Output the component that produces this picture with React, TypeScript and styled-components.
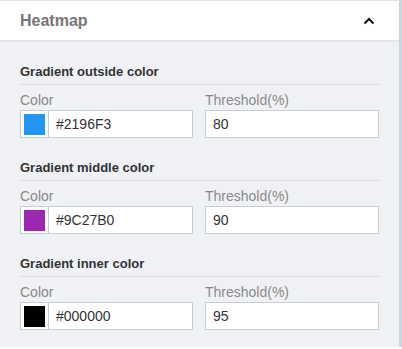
import styled, { createGlobalStyle } from "styled-components";

const GlobalStyle = createGlobalStyle`
  html, body {
    margin: 0;
    padding: 0;
    background: #ffffff;
    font-family: "Liberation Sans", Arial, sans-serif;
  }
`;

const Panel = styled.div`
  width: 402px;
  box-sizing: border-box;
  border-top: 1px solid #e1e3e6;
  border-right: 3px solid #c8d6e4;
`;

const Header = styled.div`
  height: 39px;
  display: flex;
  align-items: center;
  justify-content: space-between;
  padding: 0 24px 0 20px;
  background: #ffffff;
  border-bottom: 2px solid #e3e5e9;
`;

const Title = styled.span`
  font-size: 16px;
  font-weight: 700;
  color: #767676;
`;

const Body = styled.div`
  background: #f0f1f5;
  padding: 22px 19px 17px 20px;
  display: flex;
  flex-direction: column;
  gap: 22px;
`;

const Section = styled.div`
  display: flex;
  flex-direction: column;
`;

const SectionTitle = styled.div`
  font-size: 13px;
  line-height: 16px;
  font-weight: 700;
  color: #333333;
  padding-bottom: 4px;
  border-bottom: 1px solid #dcdee2;
`;

const Fields = styled.div`
  display: grid;
  grid-template-columns: 173px 174px;
  column-gap: 12px;
  margin-top: 7px;
`;

const Field = styled.div`
  display: flex;
  flex-direction: column;
`;

const Label = styled.label`
  font-size: 14px;
  line-height: 17px;
  color: #8a8a8a;
  margin-bottom: 1px;
`;

const InputBox = styled.div`
  height: 28px;
  box-sizing: border-box;
  display: flex;
  align-items: center;
  background: #ffffff;
  border: 1px solid #c9ced6;
`;

const SwatchWrap = styled.div`
  width: 28px;
  height: 100%;
  display: flex;
  align-items: center;
  justify-content: center;
  border-right: 1px solid #c9ced6;
  box-sizing: border-box;
`;

const Swatch = styled.div<{ $color: string }>`
  width: 21px;
  height: 21px;
  background: ${(p) => p.$color};
`;

const Value = styled.span`
  font-size: 14px;
  color: #333333;
  padding-left: 7px;
`;

function Chevron() {
  return (
    <svg width="12" height="8" viewBox="0 0 12 8">
      <polyline points="1.5,6.5 6,2 10.5,6.5" fill="none" stroke="#111" strokeWidth="2" />
    </svg>
  );
}

const sections = [
  { title: "Gradient outside color", color: "#2196F3", threshold: "80" },
  { title: "Gradient middle color", color: "#9C27B0", threshold: "90" },
  { title: "Gradient inner color", color: "#000000", threshold: "95" },
];

export default function App() {
  return (
    <>
      <GlobalStyle />
      <Panel>
        <Header>
          <Title>Heatmap</Title>
          <Chevron />
        </Header>
        <Body>
          {sections.map((s) => (
            <Section key={s.title}>
              <SectionTitle>{s.title}</SectionTitle>
              <Fields>
                <Field>
                  <Label>Color</Label>
                  <InputBox>
                    <SwatchWrap>
                      <Swatch $color={s.color} />
                    </SwatchWrap>
                    <Value>{s.color}</Value>
                  </InputBox>
                </Field>
                <Field>
                  <Label>Threshold(%)</Label>
                  <InputBox>
                    <Value>{s.threshold}</Value>
                  </InputBox>
                </Field>
              </Fields>
            </Section>
          ))}
        </Body>
      </Panel>
    </>
  );
}
